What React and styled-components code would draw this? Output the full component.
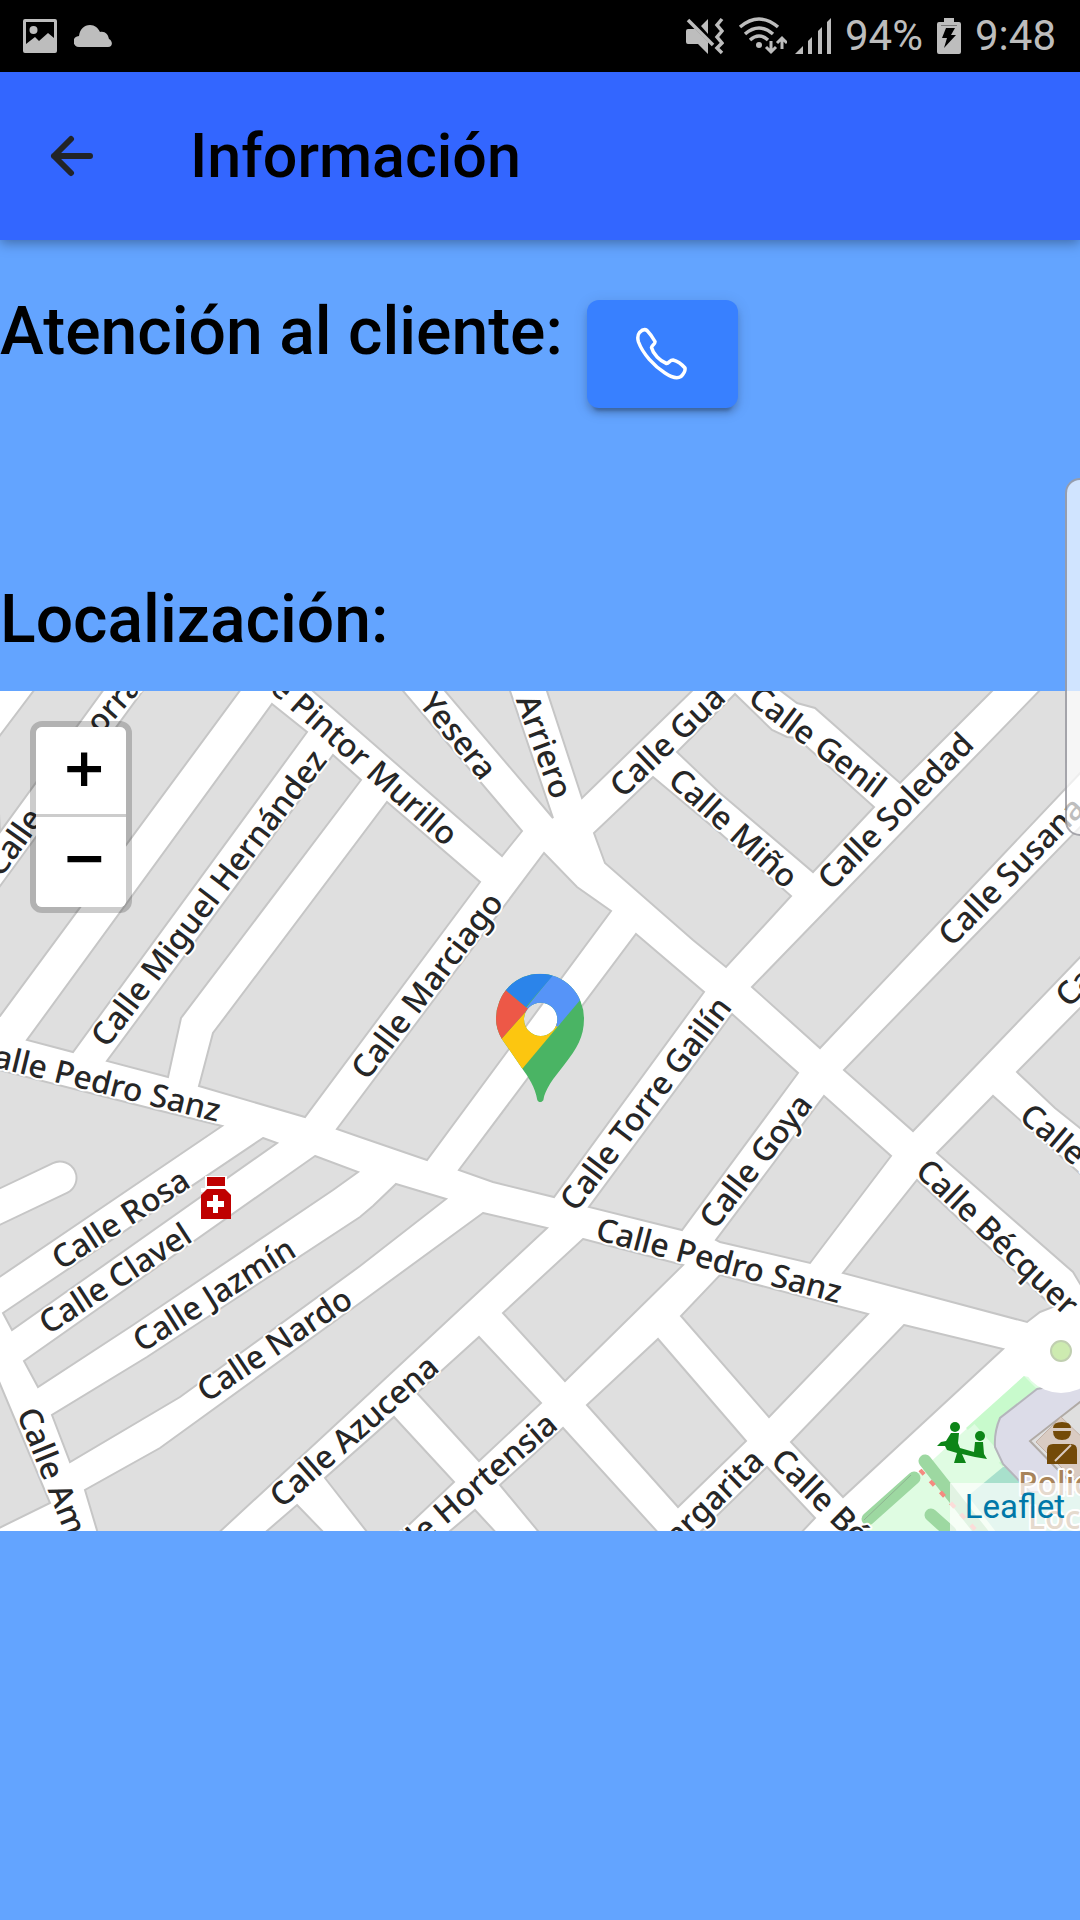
import React from "react";
import styled, { createGlobalStyle } from "styled-components";

const GlobalStyle = createGlobalStyle`
  *, *::before, *::after { box-sizing: border-box; }
  body {
    margin: 0;
    background: #63a4ff;
    color: #000;
    font-family: Roboto, "Noto Sans", sans-serif;
  }
`;

const Screen = styled.div`
  min-height: 100vh;
  display: flex;
  flex-direction: column;
  background: #63a4ff;
  overflow-x: hidden;
`;

const StatusBar = styled.div`
  height: 72px;
  padding: 0 24px 0 22px;
  display: flex;
  align-items: center;
  justify-content: space-between;
  background: #000;
  color: #bdbdbd;
  font-size: 42px;
  line-height: 48px;
`;

const StatusGroup = styled.div`
  display: flex;
  align-items: center;
  gap: ${(p) => p.$gap}px;
`;

const Header = styled.header`
  position: relative;
  height: 168px;
  padding: 0 36px;
  display: flex;
  align-items: center;
  gap: 82px;
  background: #3366ff;
  box-shadow: 0 3px 12px rgba(0, 0, 0, 0.35);
`;

const BackButton = styled.button`
  display: flex;
  align-items: center;
  justify-content: center;
  width: 72px;
  height: 72px;
  padding: 0;
  border: 0;
  background: transparent;
  color: #222428;
`;

const Title = styled.h1`
  margin: 0;
  font-size: 61px;
  font-weight: 500;
  line-height: 72px;
`;

const Content = styled.main`
  display: flex;
  flex-direction: column;
`;

const ContactRow = styled.section`
  display: flex;
  align-items: flex-start;
  gap: 24px;
  padding: 60px 0 0;
`;

const Heading = styled.h2`
  margin: 0;
  font-size: 66px;
  font-weight: 500;
  line-height: 64px;
`;

const CallButton = styled.button`
  display: flex;
  align-items: center;
  justify-content: center;
  width: 151px;
  height: 108px;
  padding: 0;
  border: 0;
  border-radius: 12px;
  background: #3880ff;
  color: #fff;
  box-shadow: 0 9px 3px -6px rgba(0, 0, 0, 0.2), 0 6px 6px rgba(0, 0, 0, 0.14),
    0 3px 15px rgba(0, 0, 0, 0.12);
`;

const LocationSection = styled.section`
  display: flex;
  flex-direction: column;
  gap: 39px;
  margin-top: 180px;
`;

const MapFrame = styled.div`
  position: relative;
  height: 840px;
  overflow: hidden;
  background: #fff;
`;

const MapCanvas = styled.svg`
  display: block;
  width: 100%;
  height: 100%;
`;

const StreetLabel = styled.text`
  font-family: "Noto Sans", "Open Sans", sans-serif;
  font-size: 32px;
  font-weight: 500;
  fill: #262626;
  stroke: #fff;
  stroke-width: 4px;
  stroke-linejoin: round;
  paint-order: stroke;
`;

const PlaceLabel = styled(StreetLabel)`
  fill: #a8845a;
`;

const MapPin = styled.svg`
  position: absolute;
  left: 50%;
  top: 282px;
  width: 90px;
  height: 130px;
  transform: translateX(-50%);
`;

const ZoomControl = styled.div`
  position: absolute;
  left: 30px;
  top: 30px;
  display: flex;
  flex-direction: column;
  border: 6px solid rgba(0, 0, 0, 0.2);
  border-radius: 12px;
  background-clip: padding-box;
`;

const ZoomButton = styled.button`
  width: 90px;
  height: 90px;
  padding: ${(p) => (p.$first ? "0 0 6px 6px" : "0 0 9px 6px")};
  border: 0;
  border-radius: ${(p) => (p.$first ? "6px 6px 0 0" : "0 0 6px 6px")};
  border-bottom: ${(p) => (p.$first ? "3px solid #ccc" : "0")};
  background: #fff;
  color: #000;
  font: bold 54px/72px "DejaVu Sans", sans-serif;
`;

const Attribution = styled.div`
  position: absolute;
  right: 0;
  bottom: 0;
  padding: 0 15px;
  background: rgba(255, 255, 255, 0.7);
  font-size: 33px;
  line-height: 48px;

  a {
    color: #0078a8;
    text-decoration: none;
  }
`;

const EdgeHandle = styled.div`
  position: absolute;
  right: 0;
  top: 478px;
  width: 15px;
  height: 358px;
  border: 2px solid rgba(110, 110, 120, 0.6);
  border-right: 0;
  border-radius: 18px 0 0 18px;
  background: rgba(255, 255, 255, 0.7);
`;

const BLOCKS = [
  "38,685 107,685 0,832 -5,738 -5,742",
  "147,685 244,685 0,1016 -5,1016 -5,893",
  "272,704 307,732 73,1052 27,1040",
  "333,755 361,780 181,1018 168,1077 107,1061",
  "387,802 480,882 305,1117 199,1086 213,1033",
  "544,853 577,887 611,911 427,1160 360,1137 337,1129",
  "636,934 704,992 554,1197 493,1182 459,1170",
  "306,685 398,685 522,831 502,856 360,732",
  "440,685 553,818 508,685",
  "545,685 582,798 698,685",
  "735,694 772,730 787,737 797,738 874,807 813,872 720,793 677,752",
  "773,685 797,703 815,708 900,783 998,685",
  "653,777 720,833 791,896 726,967 693,940 605,863 594,833",
  "752,987 820,1048 1085,768 1085,685 1045,685",
  "844,1070 913,1131 1085,952 1085,822",
  "1017,1072 1085,1003 1085,1132 1055,1108",
  "732,1014 798,1073 682,1230 589,1207",
  "824,1096 891,1156 810,1263 720,1242 716,1240",
  "917,1180 1053,1307 1040,1312 1027,1322 843,1273",
  "937,1153 993,1096 1085,1178 1085,1292 1073,1272",
  "720,1275 868,1314 769,1417 681,1316",
  "904,1325 1003,1349 843,1497 791,1442",
  "583,1239 683,1265 565,1381 503,1313",
  "658,1339 746,1441 678,1507 587,1405",
  "479,1337 541,1403 479,1461 417,1393",
  "563,1428 662,1537 543,1537 500,1485",
  "394,1417 454,1482 396,1537 371,1537 325,1478",
  "475,1510 500,1537 443,1537",
  "297,1505 328,1537 260,1537",
  "483,1213 547,1228 360,1402 214,1537 99,1537 85,1490 160,1448 360,1303",
  "396,1184 446,1199 360,1266 180,1397 70,1462 52,1415 147,1357 360,1217 373,1206",
  "315,1156 358,1172 333,1190 133,1325 38,1387 24,1361",
  "263,1138 277,1143 12,1330 3,1313",
  "-5,1069 157,1110 222,1126 -5,1280",
  "-5,1372 50,1503 -5,1530",
  "767,1467 815,1518 797,1537 695,1537",
];

/* Each label runs along the segment from -> to; the anchor tells which point the text sticks to. */
const STREETS = [
  ["Calle Miguel Hernández", 101, 1038, 316, 758],
  ["Calle Pedro Sanz", 0, 1057, 220, 1111, "end"],
  ["Calle", -8, 872, 38, 808, "start"],
  ["orra", 92, 728, 135, 680, "start"],
  ["Calle Pintor Murillo", 300, 703, 453, 839, "end"],
  ["Yesera", 427, 697, 490, 775, "end"],
  ["Arriero", 527, 698, 562, 795],
  ["Calle Gua", 615, 791, 718, 693, "start"],
  ["Calle Genil", 751, 691, 884, 792],
  ["Calle Miño", 676, 776, 791, 880],
  ["Calle Soledad", 821, 886, 970, 736],
  ["Calle Susana", 944, 940, 1076, 805, "start"],
  ["Calle", 1061, 1001, 1100, 961, "start"],
  ["Calle Marciago", 358, 1075, 496, 896],
  ["Calle Torre Gailín", 567, 1206, 724, 1001],
  ["Calle Goya", 706, 1224, 805, 1098],
  ["Calle Pedro Sanz", 595, 1228, 843, 1293],
  ["Calle Bécquer", 923, 1166, 1072, 1308],
  ["Calle Azahar", 1025, 1110, 1072, 1150, "start"],
  ["Calle Rosa", 54, 1262, 187, 1176],
  ["Calle Clavel", 42, 1326, 188, 1231],
  ["Calle Jazmín", 135, 1344, 293, 1245],
  ["Calle Nardo", 200, 1394, 349, 1295],
  ["Calle Azucena", 274, 1501, 434, 1361],
  ["Calle Hortensia", 443, 1513, 552, 1419, "end"],
  ["Calle Margarita", 691, 1520, 758, 1455, "end"],
  ["Calle Bétera", 777, 1454, 847, 1523, "start"],
  ["Calle Amapola", 27, 1409, 73, 1523, "start"],
];

function Street({ item }) {
  const [name, x1, y1, x2, y2, anchor = "middle"] = item;
  const angle = (Math.atan2(y2 - y1, x2 - x1) * 180) / Math.PI;
  const t = { start: 0, middle: 0.5, end: 1 }[anchor];
  const x = x1 + (x2 - x1) * t;
  const y = y1 + (y2 - y1) * t;
  return (
    <StreetLabel
      textAnchor={anchor}
      dy="0.35em"
      transform={`translate(${x} ${y}) rotate(${angle})`}
    >
      {name}
    </StreetLabel>
  );
}

function StreetMap() {
  return (
    <MapCanvas
      viewBox="0 691 1080 840"
      preserveAspectRatio="xMidYMid slice"
      role="img"
      aria-label="Mapa de calles"
    >
      <rect x="-10" y="680" width="1100" height="860" fill="#fff" />
      <g fill="#dfdfdf" stroke="#c6c6c6" strokeWidth="2">
        {BLOCKS.map((points) => (
          <polygon key={points} points={points} />
        ))}
      </g>
      <path d="M-20 1216 60 1178" stroke="#c6c6c6" strokeWidth="35" strokeLinecap="round" />
      <path d="M-20 1216 60 1178" stroke="#fff" strokeWidth="31" strokeLinecap="round" />

      <path d="M1024 1376 862 1525 872 1537 1085 1537 1085 1389Z" fill="#dffce2" />
      <path d="M1024 1376 966 1428 1003 1467 1037 1389Z" fill="#c8facc" />
      <path d="M970 1428 1000 1462" stroke="#dffce2" strokeWidth="12" />
      <path d="M1003 1467 968 1496 1000 1537H1085V1467Z" fill="#a8e0cc" />
      <path
        d="M1037 1389 1000 1418Q994 1432 995 1447L1003 1464 1030 1492H1085V1380Z"
        fill="#dcdce8"
        stroke="#b5b5bc"
        strokeWidth="2"
      />
      <path d="M1085 1398 1030 1441 1062 1474 1085 1495Z" fill="#dfdfdf" stroke="#b0aaa5" strokeWidth="2" />
      <path d="M1061 1417 1036 1442 1074 1480 1085 1472V1440Z" fill="#d9cbc2" stroke="#c3b1a6" />
      <g stroke="#9dd8a1" strokeLinecap="round" strokeWidth="13">
        <path d="M914 1478 868 1519M925 1461 985 1537M931 1515 950 1532" />
      </g>
      <path d="M911 1475 864 1520" stroke="#8eb391" strokeWidth="1" />
      <path d="M920 1470 985 1540" stroke="#f58a80" strokeWidth="4" strokeDasharray="6 9" />
      <circle cx="1061" cy="1351" r="42" fill="#fff" />
      <circle cx="1061" cy="1351" r="10" fill="#cdebb0" stroke="#c0cfb0" strokeWidth="2" />

      <g fill="#0d8517">
        <circle cx="955" cy="1427" r="5" />
        <circle cx="980" cy="1436" r="5" />
        <path d="M951 1433h8l-1 10 2 5 14 4 1-10h8l1 12 3 5-12-2-13-3 4 9h-12l3-10-10-3-2-4-8 0 4-4 5-1z" />
      </g>
      <g fill="#734a08">
        <path d="M1053 1428q0-6 9-6t9 6z" />
        <path d="M1053 1431h18q0 9-9 9t-9-9z" />
        <path d="M1047 1464v-14q0-6 6-6h18q6 0 6 6v14z" />
        <path d="M1055 1461 1071 1445" stroke="#d9cbc2" strokeWidth="2" />
      </g>
      <PlaceLabel x="1018" y="1495">Policía</PlaceLabel>
      <PlaceLabel x="1028" y="1529">Local</PlaceLabel>

      {STREETS.map((item) => (
        <Street key={item.join()} item={item} />
      ))}

      <g>
        <path d="M205 1176h22v12h4v4h-30v-4h4z" fill="#fff" />
        <path d="M207 1177h18v9h-18z" fill="#bf0000" />
        <path d="M201 1219v-24l6-6h18l6 6v24z" fill="#bf0000" />
        <path d="M213 1195h5v6h6v6h-6v6h-5v-6h-6v-6h6z" fill="#fff" />
      </g>
    </MapCanvas>
  );
}

function Pin() {
  return (
    <MapPin viewBox="405 848 270 390" aria-hidden="true">
      <defs>
        <clipPath id="pin-shape">
          <path
            clipRule="evenodd"
            d="M408 985A132 135 0 0 1 672 985C672 1040 650 1075 615 1120 580 1165 555 1195 550 1230Q540 1242 532 1230C526 1190 505 1160 487 1135L425 1045Q408 1015 408 985ZM592 987A50 50 0 1 0 492 987 50 50 0 1 0 592 987Z"
          />
        </clipPath>
      </defs>
      <g clipPath="url(#pin-shape)">
        <path d="M400 840H700V1240H400Z" fill="#4ab464" />
        <path d="M425 1045 505 955 600 1000 487 1135 400 1100Z" fill="#fcc610" />
        <path d="M579 853 700 840 658 932 593 1009 540 990 490 963Z" fill="#5694f8" />
        <path d="M436 899 400 840H592L497 950Z" fill="#2b84ea" />
        <path d="M443 905 400 860V1075L425 1045 505 955 497 950Z" fill="#ed5847" />
      </g>
    </MapPin>
  );
}

function PictureIcon() {
  return (
    <svg width="36" height="36" viewBox="0 0 36 36" aria-hidden="true">
      <path
        fill="currentColor"
        fillRule="evenodd"
        d="M3 1h30q2 0 2 2v30q0 2-2 2H3q-2 0-2-2V3q0-2 2-2ZM4 4v22l9-7 4 4 9-8 6 5V4Z"
      />
      <circle cx="11.500" cy="12" r="4" fill="currentColor" />
    </svg>
  );
}

function CloudIcon() {
  return (
    <svg width="38" height="24" viewBox="0 0 38 24" aria-hidden="true">
      <path
        fill="currentColor"
        d="M5 23a5 5 0 0 1 0-11C6 5 10 1 16 1c5 0 8 3 10 7 5-1 8 2 9 7 4 2 4 8-1 8Z"
      />
    </svg>
  );
}

function MutedIcon() {
  return (
    <svg width="39" height="38" viewBox="0 0 39 38" aria-hidden="true">
      <path fill="currentColor" d="M3 12h7L23 25v12L13 27H3q-2 0-2-2V14q0-2 2-2ZM16 9l7-7v15Z" />
      <path d="M3 3 28 28" stroke="currentColor" strokeWidth="3.500" />
      <path d="M37 2 32 8l5 6-5 6 5 6-5 5 5 5" fill="none" stroke="currentColor" strokeWidth="3.500" />
    </svg>
  );
}

function WifiIcon() {
  return (
    <svg width="49" height="38" viewBox="0 0 49 38" aria-hidden="true">
      <g fill="none" stroke="currentColor" strokeWidth="3.500">
        <path d="M2 10Q21-6 40 10M7 17Q21 5 35 17M12 23Q21 15 30 23" />
        <path d="M33 24v10M28 30l5 5 5-5" strokeWidth="3" />
        <path d="M44 32V22M39 26l5-5 5 5" strokeWidth="3" />
      </g>
      <circle cx="21" cy="28" r="3" fill="currentColor" />
    </svg>
  );
}

function SignalIcon() {
  return (
    <svg width="36" height="38" viewBox="0 0 36 38" aria-hidden="true">
      <path
        fill="currentColor"
        d="M0 37 8 29v8ZM13 37V24l4-4v17ZM23 37V14l4-4v27ZM32 37V5l4-4v36Z"
      />
    </svg>
  );
}

function BatteryIcon() {
  return (
    <svg width="24" height="36" viewBox="0 0 24 36" aria-hidden="true">
      <path fill="currentColor" d="M7 0h10v4h5q2 0 2 2v28q0 2-2 2H2q-2 0-2-2V6q0-2 2-2h5Z" />
      <path fill="#000" d="M9 10h9l-4 7h5L7 30l3-10H5Z" />
      <path d="M4 7.500h16" stroke="#777" />
    </svg>
  );
}

function PhoneIcon() {
  return (
    <svg width="54" height="54" viewBox="0 0 54 54" aria-hidden="true">
      <path
        d="M4.500 5.500C7 3 10 2 12 3.500 15 6.500 18 11 20 14.500 20.500 17 17 18 16.500 20.500 18 27 25 34 31.500 36.500 34 36 35 33 38 33 42 34 47 37.500 50 41 50.500 44 48 47.500 46 49.500 42 52 36 50 30 46 19 39 8 27 3.500 15 2 10 2.500 8 4.500 5.500Z"
        fill="none"
        stroke="currentColor"
        strokeWidth="3.500"
        strokeLinejoin="round"
      />
    </svg>
  );
}

export default function App() {
  return (
    <Screen>
      <GlobalStyle />
      <StatusBar>
        <StatusGroup $gap={16}>
          <PictureIcon />
          <CloudIcon />
        </StatusGroup>
        <StatusGroup $gap={14}>
          <MutedIcon />
          <StatusGroup $gap={8}>
            <WifiIcon />
            <SignalIcon />
          </StatusGroup>
          <span>94%</span>
          <BatteryIcon />
          <span>9:48</span>
        </StatusGroup>
      </StatusBar>

      <Header>
        <BackButton type="button" aria-label="Volver">
          <svg width="44" height="44" viewBox="0 0 44 44" aria-hidden="true">
            <path
              d="M21 5 4 22 21 39M4 22H40"
              fill="none"
              stroke="currentColor"
              strokeWidth="6"
              strokeLinecap="round"
              strokeLinejoin="round"
            />
          </svg>
        </BackButton>
        <Title>Información</Title>
      </Header>

      <Content>
        <ContactRow>
          <Heading>Atención al cliente:</Heading>
          <CallButton type="button" aria-label="Llamar">
            <PhoneIcon />
          </CallButton>
        </ContactRow>

        <LocationSection>
          <Heading>Localización:</Heading>
          <MapFrame>
            <StreetMap />
            <Pin />
            <ZoomControl>
              <ZoomButton type="button" aria-label="Acercar" $first>+</ZoomButton>
              <ZoomButton type="button" aria-label="Alejar">−</ZoomButton>
            </ZoomControl>
            <Attribution>
              <a href="https://leafletjs.com">Leaflet</a>
            </Attribution>
          </MapFrame>
        </LocationSection>
      </Content>
      <EdgeHandle />
    </Screen>
  );
}
